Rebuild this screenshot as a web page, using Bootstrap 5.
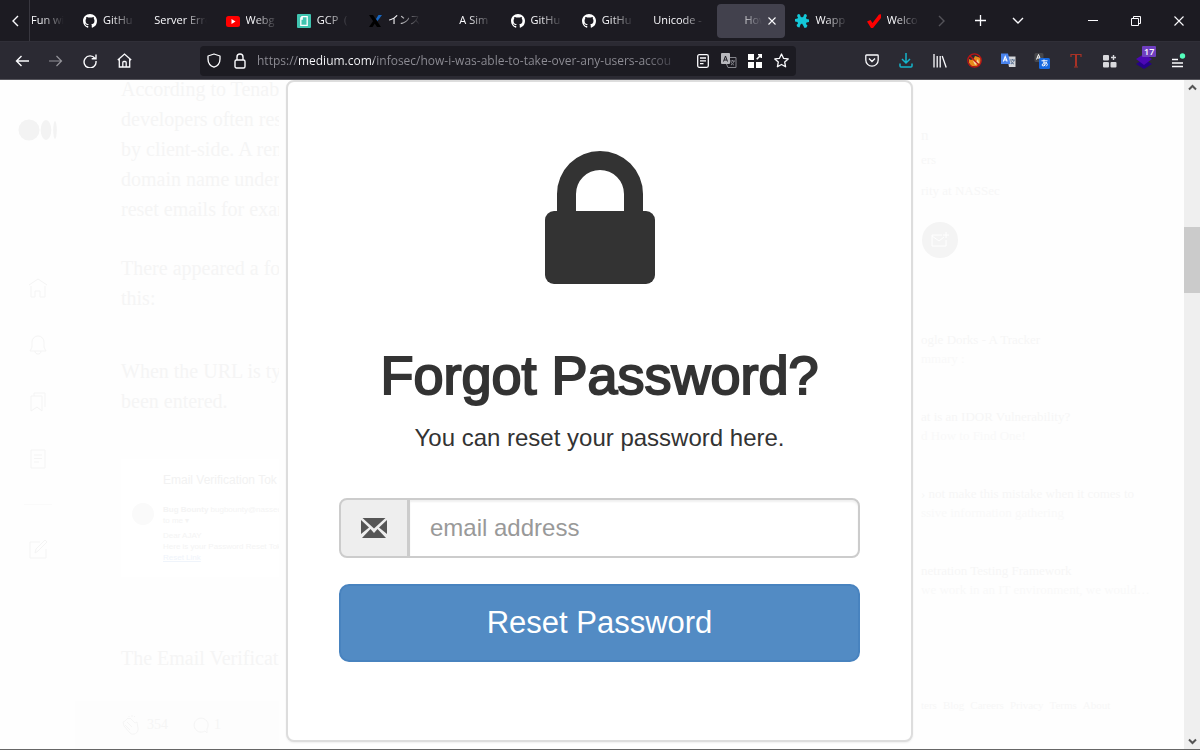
<!DOCTYPE html>
<html lang="en">
<head>
<meta charset="utf-8">
<meta name="viewport" content="width=device-width, initial-scale=1">
<title>Forgot Password</title>
<link href="https://cdn.jsdelivr.net/npm/bootstrap@5.3.0/dist/css/bootstrap.min.css" rel="stylesheet">
<script src="https://cdn.jsdelivr.net/npm/bootstrap@5.3.0/dist/js/bootstrap.bundle.min.js" defer></script>
<style>
  body { background: #fefefe; font-family: "Open Sans", "Noto Sans", "Noto Sans CJK JP", sans-serif; }
  .shell { height: 100vh; border-bottom: 1px solid #666; }
  button.bare { background: none; border: 0; padding: 0; color: inherit; display: flex; align-items: center; justify-content: center; flex: none; }
  svg { flex: none; display: block; }

  /* tab strip */
  .tabstrip { background: #1c1b22; height: 41px; color: #fbfbfe; font-size: 11px; }
  .scroll-left { width: 30px; border-right: 1px solid #38373f !important; }
  .tabs { flex: 0 1 901px; min-width: 0; }
  .tab { flex: 1 1 0; min-width: 0; height: 34px; padding: 0 12px 0 7px; gap: 6px; border-radius: 4px; }
  .tab.first { flex: 0 0 46px; padding-left: 1px; }
  .tab.current { background: #42414d; flex: 0 0 68px; margin-right: 3px; padding-right: 8px; }
  .tab.current .tab-text { flex: 0 0 18px; }
  .tab-text { flex: 1 1 0; min-width: 0; overflow: hidden; white-space: nowrap; mask-image: linear-gradient(to left, transparent, #000 24px); -webkit-mask-image: linear-gradient(to left, transparent, #000 24px); }
  .fav { width: 14px; height: 14px; flex: none; }
  .w-tab { width: 38px; }
  .w-win { width: 43px; }
  .after-tabs { margin-left: -8px; }

  /* toolbar */
  .toolbar { background: #2b2a33; height: 39px; color: #fbfbfe; border-top: 1px solid #302f38; border-bottom: 1px solid #56555c; padding: 0 5px; }
  .tool { width: 34px; height: 34px; position: relative; }
  .address { background: #1c1b22; height: 30px; border-radius: 4px; margin: 0 59px; padding: 0 2px 0 1px; min-width: 0; }
  .address .bare { width: 26px; }
  .address input { border: 0; outline: 0; min-width: 0; padding: 0; margin: 0 2px 0 4px; font-size: 12px; height: 26px; color: #fbfbfe; -webkit-text-fill-color: transparent;
    background: linear-gradient(to right, #8f8e96 0 42px, #fbfbfe 42px 117px, #8f8e96 117px calc(100% - 45px), #3b3a43 calc(100% - 15px)); -webkit-background-clip: text; background-clip: text; }
  .count { position: absolute; top: 2px; left: 15px; background: #6f3fc0; color: #fff; font-size: 9px; line-height: 11px; padding: 0 2px; border-radius: 1px; font-weight: 600; }

  /* article behind the dialog */
  .view { min-height: 0; overflow: hidden; }
  .rail { width: 75px; color: #f4f4f4; padding-top: 39px; }
  .rail .logo { margin-bottom: 135px; }
  .rail .stack { gap: 33px; }
  .rail hr { width: 28px; margin: 0; border-color: #eee; }
  .story { flex: 0 1 204px; min-width: 0; overflow: hidden; font-family: "Liberation Serif", serif; font-size: 20px; line-height: 30px; color: #f5f5f5; white-space: nowrap; padding-left: 46px; justify-content: flex-end; }
  .story p { margin: 0 0 29px; }
  .story .wide { margin-bottom: 43px; }
  .story .last { margin: 66px 0 28px; }
  .mail { height: 118px; background: #fff; font: 8px/11px "Liberation Sans", sans-serif; padding: 14px 0 0 11px; gap: 9px; color: #f4f4f4; }
  .mail h6 { font: 12px/15px "Liberation Sans", sans-serif; margin: 0 0 16px; color: #f2f2f2; }
  .mail .avatar { width: 22px; height: 22px; border-radius: 50%; background: #fafafa; margin-top: 30px; }
  .mail a { color: #eff4fb; }
  .react { height: 48px; font-size: 14px; margin-left: -46px; padding-left: 46px; background: #fdfdfd; }

  /* dialog */
  .dialog-zone { flex: 0 1 642px; background: #fefefe; padding: 0 8px 0 7px; min-width: 0; }
  .panel { background: #fff; border: 2px solid #ddd; border-radius: 8px; box-shadow: 0 1px 2px #0001; height: 662px; padding: 69px 51px 0; color: #333; font-family: "Liberation Sans", sans-serif; }
  .panel h1 { font-size: 54px; line-height: 60px; margin: 60px 0 18px; font-weight: 400; -webkit-text-stroke: 2px #333; white-space: nowrap; }
  .panel p { font-size: 24px; line-height: 30px; margin: 0 0 45px; }
  .field { height: 60px; margin-bottom: 26px; }
  .field .input-group-text { width: 70px; background: #eee; border: 2px solid #ccc; border-radius: 8px; }
  .field .form-control { border: 2px solid #ccc; border-radius: 8px; font-size: 24px; padding: 0 20px; box-shadow: inset 0 2px 2px #00000010; }
  .field .form-control::placeholder { color: #999; }
  .btn.reset { --bs-btn-bg: #528bc4; --bs-btn-hover-bg: #3f79b4; --bs-btn-border-color: #4883bf; --bs-btn-color: #fff; --bs-btn-hover-color: #fff; border-width: 2px; border-radius: 10px; height: 78px; font-size: 31px; line-height: 40px; }

  /* author column */
  .side { min-width: 0; font-family: "Liberation Serif", serif; font-size: 13px; line-height: 19px; color: #f7f7f7; white-space: nowrap; overflow: hidden; padding-top: 44px; }
  .side .author { font-size: 15px; line-height: 22px; margin-bottom: 4px; }
  .side .bio { margin: 12px 0 22px; }
  .side .subscribe { width: 36px; height: 36px; border-radius: 50%; background: #f4f4f4; margin: 0 0 72px 1px; color: #fff; }
  .side .pick { margin-bottom: 39px; color: #f9f9f9; }
  .side .pick strong { font-weight: 400; color: #f6f6f6; display: block; }
  .side .links { font-size: 11px; gap: 6px; margin-top: 97px; }
  .side a { color: inherit; text-decoration: none; }
  .track { width: 16px; background: #efefef; color: #555; padding: 4px 0; }
  .thumb { background: #cbcbcb; height: 66px; margin-top: 136px; }
</style>
</head>
<body>
<svg width="0" height="0" class="position-absolute" aria-hidden="true">
  <symbol id="octo" viewBox="0 0 16 16"><path fill="#fff" d="M8 0C3.58 0 0 3.58 0 8c0 3.54 2.29 6.53 5.47 7.59.4.07.55-.17.55-.38 0-.19-.01-.82-.01-1.49-2.01.37-2.53-.49-2.69-.94-.09-.23-.48-.94-.82-1.13-.28-.15-.68-.52-.01-.53.63-.01 1.08.58 1.23.82.72 1.21 1.87.87 2.33.66.07-.52.28-.87.51-1.07-1.78-.2-3.64-.89-3.64-3.95 0-.87.31-1.59.82-2.15-.08-.2-.36-1.02.08-2.12 0 0 .67-.21 2.2.82.64-.18 1.32-.27 2-.27s1.36.09 2 .27c1.53-1.04 2.2-.82 2.2-.82.44 1.1.16 1.92.08 2.12.51.56.82 1.27.82 2.15 0 3.07-1.87 3.75-3.65 3.95.29.25.54.73.54 1.48 0 1.07-.01 1.93-.01 2.2 0 .21.15.46.55.38A8.01 8.01 0 0 0 16 8c0-4.42-3.58-8-8-8z"/></symbol>
</svg>
<div class="shell d-flex flex-column">

  <div class="tabstrip d-flex align-items-center flex-shrink-0">
    <button class="bare scroll-left h-100" aria-label="Scroll tabs left"><svg width="8" height="12" fill="none" stroke="currentColor" stroke-width="1.4"><path d="M7 1 2 6l5 5"/></svg></button>
    <div class="tabs d-flex">
      <div class="tab first d-flex align-items-center"><span class="tab-text">Fun wi</span></div>
      <div class="tab d-flex align-items-center"><svg class="fav"><use href="#octo"/></svg><span class="tab-text">GitHu</span></div>
      <div class="tab d-flex align-items-center"><span class="tab-text">Server Erro</span></div>
      <div class="tab d-flex align-items-center"><svg class="fav" viewBox="0 0 14 14"><rect y="2" width="14" height="11" rx="2.5" fill="red"/><path d="M5.5 5v5L9.500 7.500z" fill="#fff"/></svg><span class="tab-text">Webg</span></div>
      <div class="tab d-flex align-items-center"><svg class="fav" viewBox="0 0 14 14"><rect width="14" height="14" rx="1" fill="#40c4b0"/><path d="M5 2.700h5.200v8.600H3.800V4zM5.200 2.700v2.500H3.800" fill="none" stroke="#fff" stroke-width="1.300"/></svg><span class="tab-text">GCP &nbsp;(</span></div>
      <div class="tab d-flex align-items-center"><svg class="fav" viewBox="0 0 14 14"><path d="M1 1h4l8 12H9z" fill="#000"/><path d="M1 13h3.500l3-4.500-2-2z" fill="#000"/><path d="M8 5 10.500 1H14L9.500 7z" fill="#1767c2"/></svg><span class="tab-text">インスタ</span></div>
      <div class="tab d-flex align-items-center"><span class="fav"></span><span class="tab-text">A Sim</span></div>
      <div class="tab d-flex align-items-center"><svg class="fav"><use href="#octo"/></svg><span class="tab-text">GitHu</span></div>
      <div class="tab d-flex align-items-center"><svg class="fav"><use href="#octo"/></svg><span class="tab-text">GitHu</span></div>
      <div class="tab d-flex align-items-center"><span class="tab-text">Unicode -</span></div>
      <div class="tab current d-flex align-items-center"><span class="fav"></span><span class="tab-text">How</span><button class="bare" aria-label="Close tab"><svg width="8" height="8" stroke="currentColor" stroke-width="1.100"><path d="m.5.5 7 7m0-7-7 7"/></svg></button></div>
      <div class="tab d-flex align-items-center"><svg class="fav" viewBox="0 0 14 14"><path fill="#14c8d8" d="M3 0 5 .5l.5 2L7 3.500l1.500-1L9 .5 11 0l1 2-1 1.500.5 1.500 2.500.5v2.500l-2.500.5-.5 1.500 1.500 1.500-1 2-2 .5-1-2L7 9.500l-1.500 1-1 3-2-.5-1-2L3 9.500 2.500 8 0 7.500V5l2.500-.5L3 3.500 2 2z"/></svg><span class="tab-text">Wapp</span></div>
      <div class="tab d-flex align-items-center"><svg class="fav" viewBox="0 0 14 14"><path fill="#f00" d="M0 7.500 3.500 6l2 3L12 .5 15 0 14 4 6 14H4z"/></svg><span class="tab-text">Welco</span></div>
    </div>
    <div class="after-tabs d-flex h-100 flex-shrink-0">
      <button class="bare w-tab opacity-25" aria-label="Scroll tabs right"><svg width="8" height="12" fill="none" stroke="currentColor" stroke-width="1.400"><path d="m1 1 5 5-5 5"/></svg></button>
      <button class="bare w-tab" aria-label="New tab"><svg width="11" height="11" stroke="currentColor" stroke-width="1.300"><path d="M5.500 0v11M0 5.500h11"/></svg></button>
      <button class="bare w-tab" aria-label="List tabs"><svg width="12" height="7" fill="none" stroke="currentColor" stroke-width="1.400"><path d="m1 1 5 5 5-5"/></svg></button>
    </div>
    <div class="d-flex h-100 ms-auto flex-shrink-0">
      <button class="bare w-win" aria-label="Minimize"><svg width="10" height="10" stroke="currentColor"><path d="M0 4.500h10"/></svg></button>
      <button class="bare w-win" aria-label="Restore"><svg width="10" height="10" fill="none" stroke="currentColor"><path d="M.5 2.500h7v7h-7zM2.500 2.500v-2h7v7h-2"/></svg></button>
      <button class="bare w-win" aria-label="Close window"><svg width="10" height="10" stroke="currentColor" stroke-width="1.100"><path d="m.5.5 9 9m0-9-9 9"/></svg></button>
    </div>
  </div>

  <nav class="toolbar d-flex align-items-center flex-shrink-0" aria-label="Browser toolbar">
    <button class="bare tool" aria-label="Back"><svg width="14" height="12" fill="none" stroke="currentColor" stroke-width="1.400"><path d="M14 6H1.500M6.500 1l-5 5 5 5"/></svg></button>
    <button class="bare tool opacity-50" aria-label="Forward"><svg width="14" height="12" fill="none" stroke="currentColor" stroke-width="1.200"><path d="M0 6h12.500M7.500 1l5 5-5 5"/></svg></button>
    <button class="bare tool" aria-label="Reload"><svg width="14" height="14" fill="none" stroke="currentColor" stroke-width="1.400"><path d="M12 4.500A6 6 0 1 0 13 7M13 .5v4.300H8.700"/></svg></button>
    <button class="bare tool" aria-label="Home"><svg width="15" height="15" fill="none" stroke="currentColor" stroke-width="1.300"><path d="M.8 7 7.500 1l6.700 6M2.300 6v8h10.400V6M5.800 14V9.500q0-1 1-1h1.400q1 0 1 1V14"/></svg></button>
    <div class="address d-flex flex-grow-1 align-items-center">
      <button class="bare" aria-label="Tracking protection"><svg width="14" height="15" fill="none" stroke="currentColor" stroke-width="1.300"><path d="M7 1 13 3v3c0 4-2.500 7-6 8.200C3.500 13 1 10 1 6V3z" stroke-linejoin="round"/></svg></button>
      <button class="bare" aria-label="Connection secure"><svg width="12" height="16" fill="none" stroke="currentColor" stroke-width="1.400"><rect x="1" y="7" width="10" height="8" rx="1.500"/><path d="M3 7V4a3 3 0 0 1 6 0v3"/></svg></button>
      <input class="flex-grow-1" type="text" aria-label="Address" value="https://medium.com/infosec/how-i-was-able-to-take-over-any-users-accou">
      <button class="bare" aria-label="Reader view"><svg width="12" height="14" fill="none" stroke="currentColor" stroke-width="1.300"><rect x=".7" y=".7" width="10.600" height="12.600" rx="1.500"/><path d="M3 4h6M3 6.800h6M3 9.600h3.500"/></svg></button>
      <button class="bare" aria-label="Translate"><svg width="16" height="16"><rect width="9" height="11" rx="1" fill="#b8b8bd"/><path d="M2.500 8.500 4.500 3l2 5.500M3.200 7h2.600" stroke="#1c1b22" fill="none"/><path d="M9 4.500h6v10H7L5.500 11M9 8h5M11.500 7v1M13 8c-.5 2-1.500 3-3 4M10 9c.7 1.500 2 2.500 3 3" fill="none" stroke="#85858c"/></svg></button>
      <button class="bare" aria-label="Extensions grid"><svg width="14" height="14" fill="#fff"><path d="M0 0h6v6H0zM0 8h6v6H0zM8 8h6v6H8z"/><path d="M10 .8h3.200V4M13 1 8.700 5.300" fill="none" stroke="#fff" stroke-width="1.600"/></svg></button>
      <button class="bare" aria-label="Bookmark"><svg width="15" height="15" viewBox="0 0 15 15" fill="none" stroke="currentColor" stroke-width="1.300" stroke-linejoin="round"><path d="m7.500 1 2 4.300 4.700.6-3.500 3.200.9 4.700-4.100-2.300-4.100 2.300.9-4.700L.8 5.900l4.700-.6z"/></svg></button>
    </div>
    <button class="bare tool" aria-label="Pocket"><svg width="14" height="13" fill="none" stroke="currentColor" stroke-width="1.300"><path d="M1.500 1h11q.7 0 .7.800V6a6.200 6.200 0 0 1-12.400 0V1.800Q.8 1 1.500 1zM4 4.500l3 3 3-3"/></svg></button>
    <button class="bare tool" aria-label="Downloads"><svg width="14" height="15" fill="none" stroke="#15b5cb" stroke-width="1.500"><path d="M7 0v10M3 6l4 4 4-4M1 10.500V13q0 1 1 1h10q1 0 1-1v-2.500"/></svg></button>
    <button class="bare tool" aria-label="Library"><svg width="14" height="14" stroke="currentColor" stroke-width="1.300"><path d="M1 0v13.500M4.200 2v11.500M7.200 2v11.500M9.200 2l4 11.500"/></svg></button>
    <button class="bare tool" aria-label="Proxy switch"><svg width="15" height="15"><path d="M2 6 4 7l2.500-1L8 3l3 1 3 1-.5 5-4 3.500-5-.5-2.500-3z" fill="#e88a1a"/><path d="m6 8 3 1 2-3 1 4-4 2z" fill="#f8d7a0"/><g fill="none" stroke="#c01515" stroke-width="1.300"><circle cx="7.500" cy="7.500" r="6.700"/><path d="m2.800 2.800 9.400 9.400"/></g></svg></button>
    <button class="bare tool" aria-label="Google Translate"><svg width="15" height="15"><path d="M6 3.500h8.500V14H8z" fill="#d5d7dc"/><path d="M0 .5h7l2.500 10.500H0z" fill="#4a84ee"/><path d="M2.300 8.500 4.200 3.500l2 5M3 7h2.600" fill="none" stroke="#fff" stroke-width="1.100"/><path d="M9 7h5M11.500 6v1M13 7c0 2-1.500 3-3 4m0-3c.5 1.500 1.500 2.500 3 3" fill="none" stroke="#5d7290"/></svg></button>
    <button class="bare tool" aria-label="Translate page"><svg width="16" height="16"><rect x=".5" width="9" height="9" rx="1.500" fill="#47474b"/><path d="M2.500 6.500 4.500 1.500l2 5M3.200 5h2.600" fill="none" stroke="#fff"/><rect x="5" y="5" width="11" height="11" rx="1.500" fill="#1769e0"/><path d="M7.500 7.800h6M10 6.500c-.2 3 0 5 .8 6.500M12.500 9c-.5 2-2 4-3.500 4s-1-3.200 2-3.200c2.800 0 3 2.700.8 3.400" fill="none" stroke="#fff"/></svg></button>
    <button class="bare tool" aria-label="Text tool"><svg width="12" height="15" fill="none" stroke="#a93226"><path d="M1 4V1.500h10V4" stroke-width="1.200"/><path d="M6 1v12.500" stroke-width="2"/><path d="M4 14h4"/></svg></button>
    <button class="bare tool" aria-label="Extensions"><svg width="14" height="14" fill="#d9d9dd"><rect y="1" width="6" height="5.500" rx="1"/><rect y="8" width="6" height="5.500" rx="1"/><rect x="7.500" y="8" width="6" height="5.500" rx="1"/><path d="M10.500 1v5M8 3.500h5" stroke="#d9d9dd" stroke-width="1.400"/></svg></button>
    <button class="bare tool" aria-label="Wappalyzer"><svg width="16" height="16"><path d="m8 6 8 5-8 5-8-5z" fill="#26018a"/><path d="m8 1 8 5-8 6-8-6z" fill="#4c08b4"/></svg><span class="count">17</span></button>
    <button class="bare tool" aria-label="Menu"><svg width="16" height="18" fill="none" stroke="currentColor" stroke-width="1.300"><path d="M2 7.500h6M2 11h11M2 14.500h11"/><circle cx="12.500" cy="4" r="2.700" fill="#54ffbd" stroke="none"/></svg></button>
  </nav>

  <main class="view d-flex flex-grow-1">
    <div class="rail d-flex flex-column align-items-center flex-shrink-0">
      <svg class="logo" width="39" height="22" fill="#f3f3f3"><circle cx="11" cy="11" r="10.500"/><ellipse cx="28" cy="11" rx="5.300" ry="10"/><ellipse cx="37" cy="11" rx="1.800" ry="9"/></svg>
      <div class="stack d-flex flex-column align-items-center">
        <svg width="24" height="24" fill="none" stroke="currentColor"><path d="m3 9 9-6 9 6M5 10v11h4v-6h5v6h5V10"/></svg>
        <svg width="24" height="24" fill="none" stroke="currentColor"><path d="M4 18c1-2 2-3 2-5V9a6 6 0 0 1 12 0v4c0 2 1 3 2 5zM9 18c0 4 6 4 6 0"/></svg>
        <svg width="24" height="24" fill="none" stroke="currentColor"><path d="M5 6h11v15l-5-4-6 4zM8 6V3h11v14"/></svg>
        <svg width="24" height="24" fill="none" stroke="currentColor"><path d="M5 3h14v18H5zM8 8h8M8 11.500h8M8 15h5"/></svg>
        <hr>
        <svg width="24" height="24" fill="none" stroke="currentColor"><path d="M14 4H4v16h16v-9M9 15l1-4 9-9 2 2-9 9z"/></svg>
      </div>
    </div>

    <article class="story d-flex flex-column">
      <p>According to Tenab<br>developers often res<br>by client-side. A rem<br>domain name under<br>reset emails for exan</p>
      <p class="wide">There appeared a fo<br>this:</p>
      <p class="wide">When the URL is ty<br>been entered.</p>
      <div class="mail d-flex flex-shrink-0">
        <div class="avatar flex-shrink-0"></div>
        <div>
          <h6>Email Verification Tok</h6>
          <b>Bug Bounty</b> bugbounty@nassec.io<br>to me ▾
          <div class="mt-1">Dear AJAY<br>Here is your Password Reset Toke<br><a href="#">Reset Link</a></div>
        </div>
      </div>
      <p class="last">The Email Verificati</p>
      <div class="react d-flex align-items-center flex-shrink-0">
        <svg width="22" height="22" fill="none" stroke="currentColor"><path d="m3 12 6 7c3 3 9 0 8-5l-1-6-2 1-5-5-1 1-1-1-2 2-1 1-2 1zM6 8l5 5M4 11l5 5M8 2v1M11 1v2M14 2l-1 1"/></svg>
        <span class="ms-1 me-4">354</span>
        <svg width="18" height="18" fill="none" stroke="currentColor"><path d="M13 15a7 7 0 1 1 2-2v4z"/></svg>
        <span class="ms-1">1</span>
      </div>
    </article>

    <section class="dialog-zone">
      <form class="panel text-center" onsubmit="return false">
        <svg class="mx-auto" width="110" height="134" fill="#333"><path d="M12 64V43a43 43 0 0 1 86 0v21H79V43a24 24 0 0 0-48 0v21z"/><rect y="60" width="110" height="73" rx="9"/></svg>
        <h1>Forgot Password?</h1>
        <p>You can reset your password here.</p>
        <div class="input-group field">
          <label class="input-group-text justify-content-center" for="email" aria-label="email address"><svg width="26" height="22" fill="#555"><path d="M1.500 1h23L13 11.500zM0 3l8 7.500L0 17zM26 3v14l-8-6.500zM9.500 12l3.500 4 3.500-4 8.500 9H1z"/></svg></label>
          <input class="form-control" id="email" type="email" placeholder="email address">
        </div>
        <button class="btn reset w-100" type="submit">Reset Password</button>
      </form>
    </section>

    <aside class="side flex-grow-1">
      <div class="author">n</div>
      <div>ers</div>
      <div class="bio">rity at NASSec</div>
      <button class="bare subscribe" aria-label="Subscribe"><svg width="18" height="16" fill="none" stroke="currentColor"><path d="M11 3H1v11h14V8M1 4l7 5 5-4M15 0v6M12 3h6"/></svg></button>
      <div class="pick"><strong>ogle Dorks - A Tracker</strong>mmary :</div>
      <div class="pick"><strong>at is an IDOR Vulnerability?</strong>d How to Find One!</div>
      <div class="pick"><strong>› not make this mistake when it comes to</strong>ssive information gathering</div>
      <div class="pick"><strong>netration Testing Framework</strong>we work in an IT environment, we would…</div>
      <div class="links d-flex"><a href="#">ters</a><a href="#">Blog</a><a href="#">Careers</a><a href="#">Privacy</a><a href="#">Terms</a><a href="#">About</a></div>
    </aside>

    <div class="track d-flex flex-column flex-shrink-0">
      <svg class="mx-auto" width="9" height="7" fill="none" stroke="currentColor" stroke-width="2"><path d="m1 5.500 3.500-3.500L8 5.500"/></svg>
      <div class="thumb"></div>
      <svg class="mx-auto mt-auto" width="9" height="7" fill="none" stroke="currentColor" stroke-width="2"><path d="m1 1.500 3.500 3.500L8 1.500"/></svg>
    </div>
  </main>
</div>
</body>
</html>
